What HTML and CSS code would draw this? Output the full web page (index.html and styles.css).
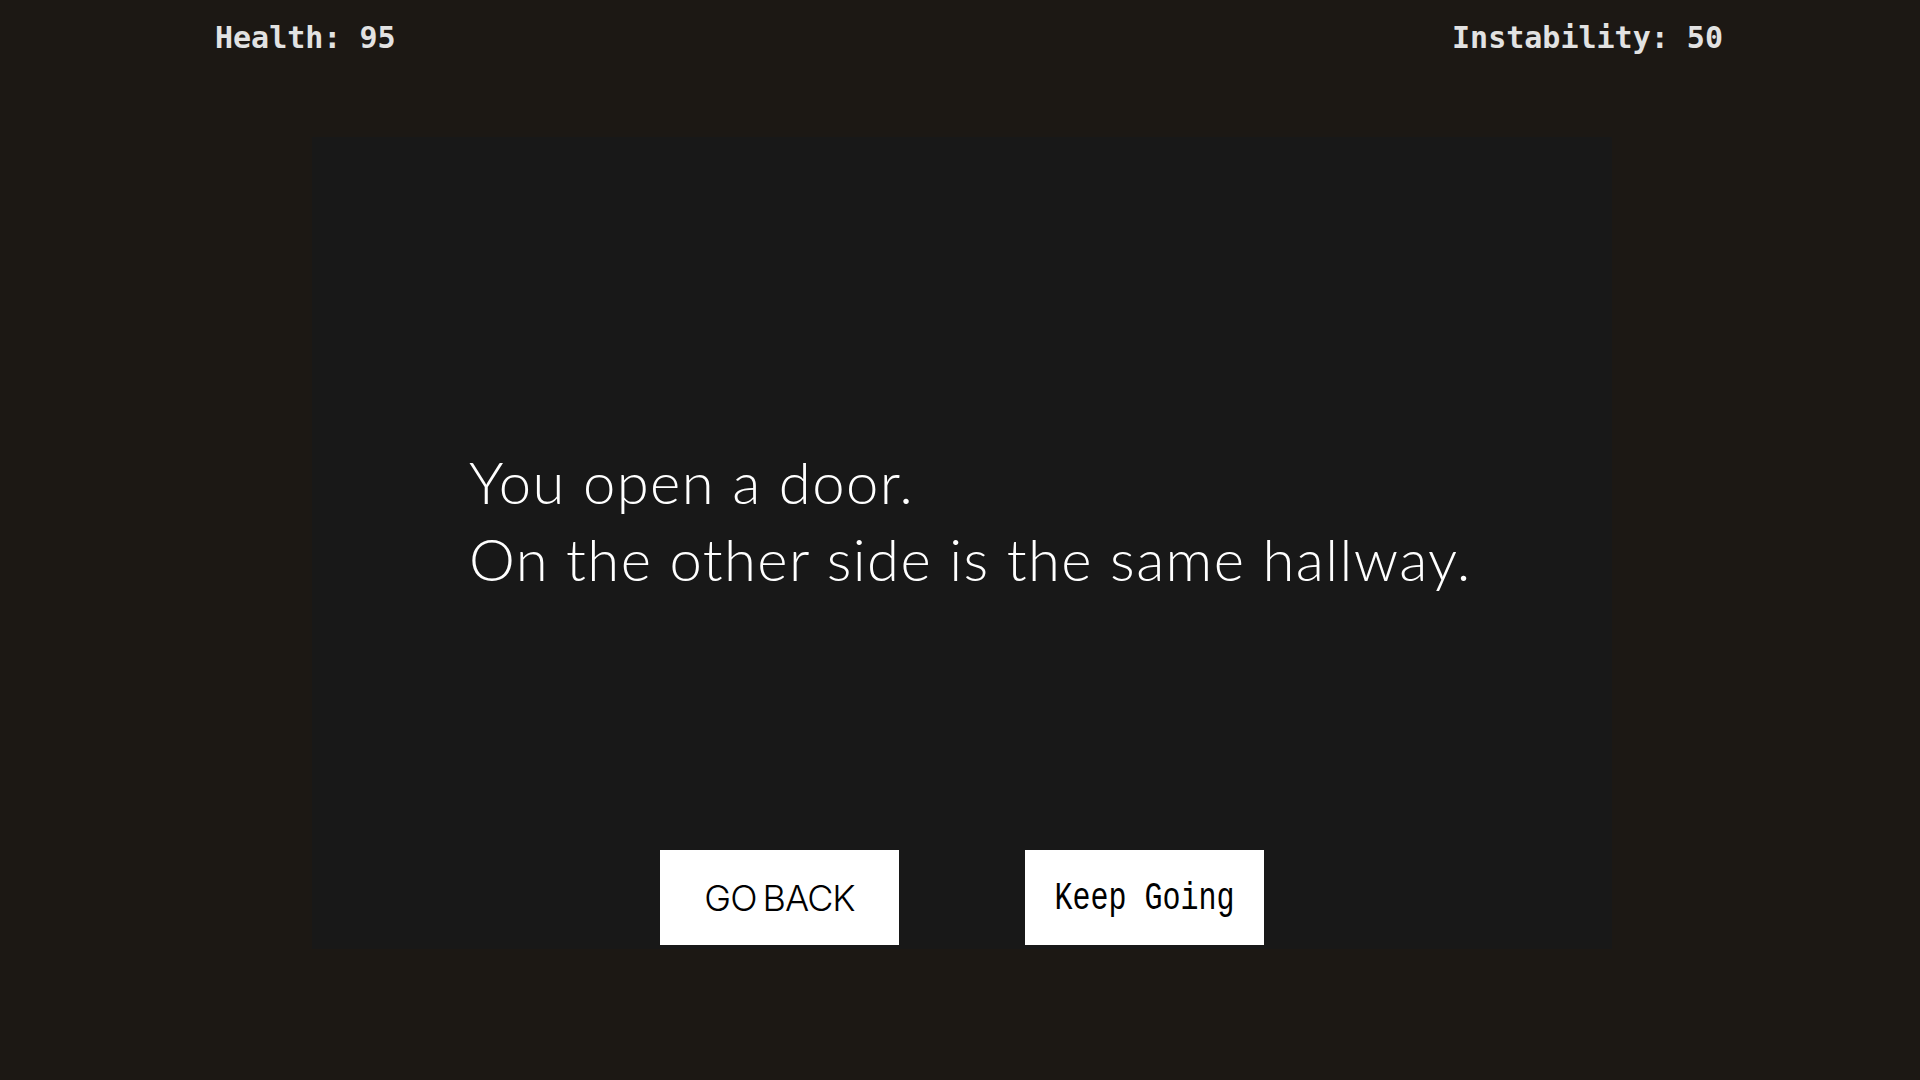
FILE: index.html
```html
<!DOCTYPE html>
<html>
<head>
  <title>Hallway</title>
  <link rel="stylesheet" href="styles.css">
</head>
<body>

  <div class="stats">
    <div id="health">Health: 95</div>
    <div id="instability">Instability: 50</div>
  </div>

  <div class="scene">
    <div class="story">
      <p>You open a door.</p>
      <p>On the other side is the same hallway.</p>
    </div>

    <div class="choices">
      <button type="button" class="choice choice-back">GO BACK</button>
      <button type="button" class="choice choice-go"><span>Keep Going</span></button>
    </div>
  </div>

</body>
</html>
```

FILE: styles.css
```css
body {
    margin: 0;
    padding: 0;
    background-color: #1c1814;
    color: #e6e6e6;
    font-family: 'DejaVu Sans', sans-serif;
    height: 1080px;
    overflow: hidden;
}

.stats {
    display: flex;
    justify-content: space-between;
    padding: 16px 197px 0 215px;
    height: 122px;
    box-sizing: border-box;
    font-family: 'DejaVu Sans Mono', monospace;
    font-weight: bold;
    font-size: 30px;
    line-height: 44px;
    color: #e2e2e2;
}

.scene {
    width: 1300px;
    height: 812px;
    margin: 15px 0 0 312px;
    background-color: #181818;
    display: flex;
    flex-direction: column;
    box-sizing: border-box;
    padding: 0 0 4px 0;
}

.story {
    padding: 306px 0 0 157px;
    font-family: 'Lato', sans-serif;
    font-weight: 300;
    font-size: 58px;
    line-height: 77px;
    letter-spacing: 1.4px;
    color: #ffffff;
}

.story p {
    margin: 0;
}

.choices {
    margin-top: auto;
    display: flex;
    gap: 126px;
    padding-left: 348px;
}

.choice {
    flex: none;
    width: 239px;
    height: 95px;
    background-color: #ffffff;
    color: #000000;
    border: none;
    border-radius: 0;
    padding: 0;
    cursor: pointer;
}

.choice-back {
    font-family: 'Inter', sans-serif;
    font-weight: 300;
    font-size: 36px;
    letter-spacing: -1px;
    word-spacing: -3px;
}

.choice-go {
    font-family: 'Liberation Mono', monospace;
    font-size: 30px;
}

.choice-go span {
    display: inline-block;
    transform: scaleY(1.32);
}
```
